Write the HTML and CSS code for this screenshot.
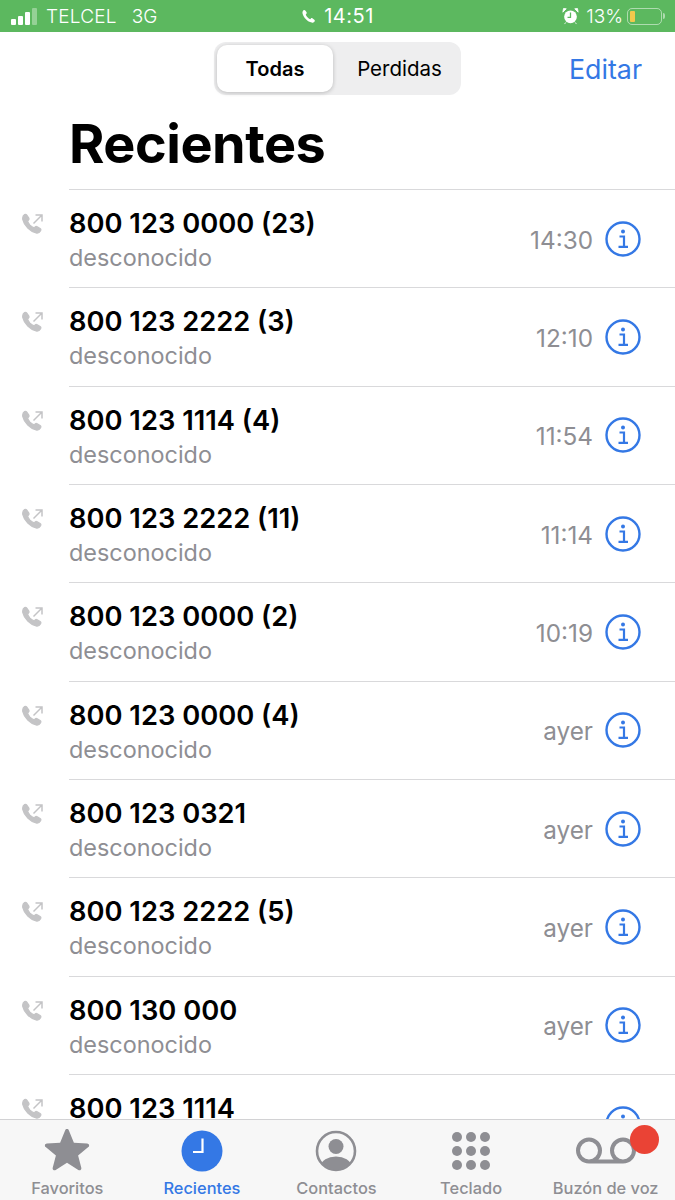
FILE: index.html
```html
<!DOCTYPE html>
<html lang="es">
<head>
    <meta charset="UTF-8">
    <meta name="viewport" content="width=device-width, initial-scale=1.0">
    <title>Recientes</title>
    <link rel="stylesheet" href="styles.css">
</head>
<body>
    <svg class="defs" width="0" height="0">
        <symbol id="call-out" viewBox="0 0 22 22">
            <path d="M2.600 1.600c.8-.5 1.600-.3 2.200.5l1.900 2.800c.5.8.4 1.500-.2 2.100l-1 1c.5 1.500 1.300 2.800 2.500 4.100 1.300 1.300 2.600 2.200 4 2.800l1.100-1c.6-.6 1.300-.7 2.100-.2l2.900 1.900c.8.6 1 1.400.5 2.200-1 1.700-2.600 2.600-4.500 2.100-3-.7-5.800-2.400-8.300-4.900C3.300 12.600 1.500 9.700.8 6.600.4 4.600 1 2.700 2.600 1.600z" fill="currentColor" stroke="currentColor" stroke-width="1.200"/>
            <path d="M11.500 10.500 19.500 2.500M13.500 2h6.500v6.500" fill="none" stroke="currentColor" stroke-width="1.500"/>
        </symbol>
        <symbol id="info" viewBox="0 0 36 36">
            <circle cx="18" cy="18" r="16.500" fill="none" stroke="currentColor" stroke-width="2.400"/>
            <circle cx="18" cy="10.500" r="2" fill="currentColor"/>
            <path d="M14.500 15.500h4.500v10M13.500 25.800h9.500" fill="none" stroke="currentColor" stroke-width="2.200"/>
        </symbol>
    </svg>

    <div class="phone">
        <div class="statusbar">
            <div class="status-left">
                <span class="signal"><i></i><i></i><i></i><i class="off"></i></span>
                <span>TELCEL</span>
                <span class="net">3G</span>
            </div>
            <div class="status-mid">
                <svg class="status-call" viewBox="0 0 22 22"><path d="M2.600 1.600c.8-.5 1.600-.3 2.200.5l1.900 2.800c.5.8.4 1.500-.2 2.100l-1 1c.5 1.500 1.300 2.800 2.500 4.100 1.300 1.300 2.600 2.200 4 2.800l1.100-1c.6-.6 1.300-.7 2.100-.2l2.900 1.900c.8.6 1 1.400.5 2.200-1 1.700-2.600 2.600-4.500 2.100-3-.7-5.800-2.400-8.300-4.900C3.300 12.600 1.500 9.700.8 6.600.4 4.600 1 2.700 2.600 1.600z" fill="#fff"/></svg>
                <span>14:51</span>
            </div>
            <div class="status-right">
                <svg class="alarm" viewBox="0 0 20 20">
                    <circle cx="10" cy="11" r="7.500" fill="#fff"/>
                    <path d="M1 5.500 5 1.500 1.800 1.200zM19 5.500 15 1.500 18.200 1.200zM4.500 17.500l-1.500 2M15.500 17.500l1.500 2" fill="#fff" stroke="#fff"/>
                    <path d="M10 6v5.500H6.500" fill="none" stroke="#5cb85f" stroke-width="1.500"/>
                </svg>
                <span>13%</span>
                <span class="battery"><span class="battery-level"></span></span>
                <span class="battery-tip"></span>
            </div>
        </div>

        <header class="topbar">
            <div class="segmented">
                <button class="seg seg-active">Todas</button>
                <button class="seg">Perdidas</button>
            </div>
            <a class="edit">Editar</a>
        </header>

        <h1 class="title">Recientes</h1>

        <div class="list">
            <div class="row">
                <svg class="call-icon"><use href="#call-out"/></svg>
                <div class="row-body">
                    <div class="row-text"><div class="number">800 123 0000 (23)</div><div class="kind">desconocido</div></div>
                    <span class="when">14:30</span>
                    <svg class="info"><use href="#info"/></svg>
                </div>
            </div>
            <div class="row">
                <svg class="call-icon"><use href="#call-out"/></svg>
                <div class="row-body">
                    <div class="row-text"><div class="number">800 123 2222 (3)</div><div class="kind">desconocido</div></div>
                    <span class="when">12:10</span>
                    <svg class="info"><use href="#info"/></svg>
                </div>
            </div>
            <div class="row">
                <svg class="call-icon"><use href="#call-out"/></svg>
                <div class="row-body">
                    <div class="row-text"><div class="number">800 123 1114 (4)</div><div class="kind">desconocido</div></div>
                    <span class="when">11:54</span>
                    <svg class="info"><use href="#info"/></svg>
                </div>
            </div>
            <div class="row">
                <svg class="call-icon"><use href="#call-out"/></svg>
                <div class="row-body">
                    <div class="row-text"><div class="number">800 123 2222 (11)</div><div class="kind">desconocido</div></div>
                    <span class="when">11:14</span>
                    <svg class="info"><use href="#info"/></svg>
                </div>
            </div>
            <div class="row">
                <svg class="call-icon"><use href="#call-out"/></svg>
                <div class="row-body">
                    <div class="row-text"><div class="number">800 123 0000 (2)</div><div class="kind">desconocido</div></div>
                    <span class="when">10:19</span>
                    <svg class="info"><use href="#info"/></svg>
                </div>
            </div>
            <div class="row">
                <svg class="call-icon"><use href="#call-out"/></svg>
                <div class="row-body">
                    <div class="row-text"><div class="number">800 123 0000 (4)</div><div class="kind">desconocido</div></div>
                    <span class="when">ayer</span>
                    <svg class="info"><use href="#info"/></svg>
                </div>
            </div>
            <div class="row">
                <svg class="call-icon"><use href="#call-out"/></svg>
                <div class="row-body">
                    <div class="row-text"><div class="number">800 123 0321</div><div class="kind">desconocido</div></div>
                    <span class="when">ayer</span>
                    <svg class="info"><use href="#info"/></svg>
                </div>
            </div>
            <div class="row">
                <svg class="call-icon"><use href="#call-out"/></svg>
                <div class="row-body">
                    <div class="row-text"><div class="number">800 123 2222 (5)</div><div class="kind">desconocido</div></div>
                    <span class="when">ayer</span>
                    <svg class="info"><use href="#info"/></svg>
                </div>
            </div>
            <div class="row">
                <svg class="call-icon"><use href="#call-out"/></svg>
                <div class="row-body">
                    <div class="row-text"><div class="number">800 130 000</div><div class="kind">desconocido</div></div>
                    <span class="when">ayer</span>
                    <svg class="info"><use href="#info"/></svg>
                </div>
            </div>
            <div class="row">
                <svg class="call-icon"><use href="#call-out"/></svg>
                <div class="row-body row-body-top">
                    <div class="row-text"><div class="number">800 123 1114</div></div>
                    <span class="when"></span>
                    <svg class="info"><use href="#info"/></svg>
                </div>
            </div>
        </div>

        <nav class="tabbar">
            <div class="tab">
                <svg class="tab-icon" viewBox="0 0 46 44"><path d="M23 0c.9 0 1.500.5 1.900 1.400l5 12.300 13.200.9c1 .1 1.700.5 1.900 1.300.3.800 0 1.500-.7 2.100l-10.200 8.500 3.200 12.300c.2 1-.1 1.700-.7 2.200-.7.500-1.500.4-2.300-.1L23 33.700l-11.300 7.200c-.8.500-1.600.6-2.300.1-.6-.5-.9-1.200-.7-2.200l3.200-12.300L1.700 18c-.7-.6-1-1.300-.7-2.100.2-.8.900-1.200 1.900-1.300l13.200-.9 5-12.300C21.500.5 22.100 0 23 0z" fill="#8e8e93"/></svg>
                <span>Favoritos</span>
            </div>
            <div class="tab tab-active">
                <svg class="tab-icon" viewBox="0 0 46 44"><circle cx="23" cy="22" r="20.500" fill="#3478e5"/><path d="M23.500 9.500v13.500h-9.500" fill="none" stroke="#fff" stroke-width="2.200"/></svg>
                <span>Recientes</span>
            </div>
            <div class="tab">
                <svg class="tab-icon" viewBox="0 0 46 44">
                    <defs><clipPath id="contact-clip"><circle cx="23" cy="22" r="18.500"/></clipPath></defs>
                    <circle cx="23" cy="22" r="19" fill="none" stroke="#8e8e93" stroke-width="2.600"/>
                    <circle cx="23" cy="17.500" r="7.500" fill="#8e8e93"/>
                    <ellipse cx="23" cy="37" rx="15" ry="9.500" fill="#8e8e93" clip-path="url(#contact-clip)"/>
                </svg>
                <span>Contactos</span>
            </div>
            <div class="tab">
                <svg class="tab-icon" viewBox="0 0 46 44" fill="#8e8e93">
                    <circle cx="9" cy="8" r="5"/><circle cx="23" cy="8" r="5"/><circle cx="37" cy="8" r="5"/>
                    <circle cx="9" cy="22" r="5"/><circle cx="23" cy="22" r="5"/><circle cx="37" cy="22" r="5"/>
                    <circle cx="9" cy="36" r="5"/><circle cx="23" cy="36" r="5"/><circle cx="37" cy="36" r="5"/>
                </svg>
                <span>Teclado</span>
            </div>
            <div class="tab">
                <svg class="tab-icon tab-icon-wide" viewBox="0 0 64 44"><path d="M15 32.500a11 11 0 1 1 0-22 11 11 0 0 1 0 22h34a11 11 0 1 1 0-22 11 11 0 0 1 0 22" fill="none" stroke="#8e8e93" stroke-width="4"/></svg>
                <span>Buzón de voz</span>
                <span class="badge"></span>
            </div>
        </nav>
    </div>
</body>
</html>
```

FILE: styles.css
```css
* {
    box-sizing: border-box;
}
html, body {
    margin: 0;
    padding: 0;
}
body {
    font-family: Inter, "Liberation Sans", sans-serif;
    background-color: white;
    color: black;
}
.defs {
    position: absolute;
}
.phone {
    display: flex;
    flex-direction: column;
    width: 675px;
    height: 1200px;
    overflow: hidden;
}

/* status bar */
.statusbar {
    flex: none;
    display: grid;
    grid-template-columns: 1fr auto 1fr;
    align-items: center;
    height: 32px;
    padding: 0 10px 0 11px;
    background-color: #5cb85f;
    color: white;
    font-size: 19px;
}
.status-left {
    display: flex;
    align-items: center;
    gap: 9px;
    font-weight: 300;
    letter-spacing: 0.2px;
}
.net {
    margin-left: 6px;
}
.signal {
    display: flex;
    align-items: flex-end;
    gap: 2px;
    height: 17px;
}
.signal i {
    width: 5px;
    background-color: white;
    border-radius: 1px;
}
.signal i:nth-child(1) { height: 6px; }
.signal i:nth-child(2) { height: 9px; }
.signal i:nth-child(3) { height: 13px; }
.signal i:nth-child(4) { height: 17px; }
.signal i.off {
    background-color: rgba(255, 255, 255, 0.35);
}
.status-mid {
    display: flex;
    align-items: center;
    gap: 7px;
    font-size: 20px;
    font-weight: 400;
    letter-spacing: 0.5px;
}
.status-call {
    width: 15px;
    height: 15px;
}
.status-right {
    display: flex;
    align-items: center;
    justify-content: flex-end;
    font-weight: 300;
}
.alarm {
    width: 17px;
    height: 18px;
    margin-right: 7px;
}
.battery {
    display: flex;
    width: 35px;
    height: 17px;
    margin-left: 4px;
    padding: 2px;
    border: 1px solid rgba(255, 255, 255, 0.5);
    border-radius: 5px;
}
.battery-level {
    width: 5px;
    background-color: #f2c94c;
    border-radius: 1px;
}
.battery-tip {
    width: 2px;
    height: 6px;
    margin-left: 1px;
    background-color: rgba(255, 255, 255, 0.5);
    border-radius: 0 2px 2px 0;
}

/* top bar */
.topbar {
    flex: none;
    display: flex;
    align-items: center;
    justify-content: space-between;
    height: 74px;
    padding: 0 33px 0 214px;
}
.segmented {
    display: flex;
    width: 247px;
    height: 53px;
    margin-bottom: 1px;
    padding: 3px;
    background-color: #eeeeef;
    border-radius: 12px;
}
.seg {
    flex: 1;
    padding: 0 0 0 8px;
    border: none;
    background: none;
    color: black;
    font-family: inherit;
    font-size: 20.5px;
    font-weight: 400;
}
.seg-active {
    flex: none;
    width: 116px;
    padding: 0;
    background-color: white;
    border-radius: 10px;
    box-shadow: 0 1px 4px rgba(0, 0, 0, 0.22);
    font-weight: 600;
    font-size: 20px;
}
.edit {
    margin-bottom: 1px;
    color: #3478e5;
    font-size: 26.8px;
}
.title {
    flex: none;
    height: 83px;
    margin: 0;
    padding-left: 69px;
    font-size: 54px;
    font-weight: 700;
    line-height: 76px;
    letter-spacing: -0.5px;
}

/* calls */
.list {
    flex: 1;
    min-height: 0;
    overflow: hidden;
}
.row {
    display: flex;
    height: 98.33px;
}
.call-icon {
    flex: none;
    width: 22px;
    height: 22px;
    margin: 24px 25px 0 22px;
    color: #c4c4c6;
}
.row-body {
    flex: 1;
    display: flex;
    align-items: center;
    padding-right: 34px;
    border-top: 1px solid #d9d9db;
}
.row-body-top {
    align-items: flex-start;
    padding-top: 17px;
}
.row-text {
    flex: 1;
}
.number {
    margin-top: 5px;
    font-size: 27.300px;
    font-weight: 600;
    line-height: 34px;
}
.row-body-top .number {
    margin-top: 0;
}
.kind {
    color: #8e8e93;
    font-size: 23.400px;
    line-height: 34px;
}
.when {
    margin-top: 2px;
    color: #8e8e93;
    font-size: 24.300px;
}
.info {
    flex: none;
    width: 36px;
    height: 36px;
    margin-left: 12px;
    color: #3478e5;
}
.row-body-top .info {
    margin-top: 14px;
}

/* tabs */
.tabbar {
    flex: none;
    display: grid;
    grid-template-columns: repeat(5, 1fr);
    height: 81px;
    padding-right: 2px;
    background-color: #f7f7f7;
    border-top: 1px solid #d2d2d4;
}
.tab {
    position: relative;
    display: flex;
    flex-direction: column;
    align-items: center;
    padding-top: 9px;
    color: #8e8e93;
    font-size: 16.400px;
    font-weight: 500;
}
.tab-active {
    color: #3478e5;
}
.tab-icon {
    width: 46px;
    height: 44px;
    margin-bottom: 5px;
}
.tab-icon-wide {
    width: 64px;
}
.badge {
    position: absolute;
    top: 5px;
    left: 92px;
    width: 29px;
    height: 29px;
    background-color: #ea4335;
    border-radius: 50%;
}
```
